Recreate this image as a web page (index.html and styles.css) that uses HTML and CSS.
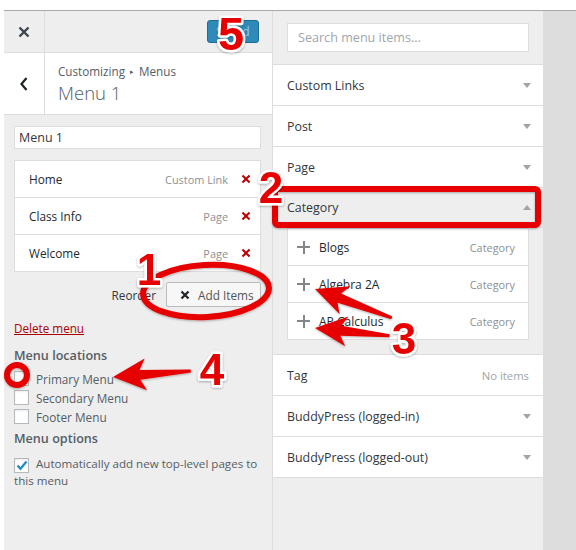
FILE: index.html
```html
<!DOCTYPE html>
<html>
<head>
<meta charset="utf-8">
<link rel="stylesheet" href="styles.css">
</head>
<body>
<div class="app">
  <aside class="left">
    <div class="hdr">
      <div class="close"><svg width="12" height="12" viewBox="0 0 12 12"><path d="M1.5 1.5L10.5 10.5M10.5 1.5L1.5 10.5" stroke="#3c434a" stroke-width="2.4"/></svg></div>
      <button class="save">Saved</button>
    </div>
    <div class="title">
      <div class="back"><svg width="8" height="14" viewBox="0 0 8 14"><path d="M6.5 1L1.5 7L6.5 13" fill="none" stroke="#1d2327" stroke-width="2.2"/></svg></div>
      <div class="ttext">
        <div class="crumb">Customizing<span class="sep">&#9656;</span>Menus</div>
        <div class="mname">Menu 1</div>
      </div>
    </div>
    <div class="lbody">
      <div class="name">Menu 1</div>
      <ul class="mitems">
        <li class="mitem"><span class="it">Home</span><span class="ty">Custom Link</span><span class="del"></span></li>
        <li class="mitem"><span class="it">Class Info</span><span class="ty">Page</span><span class="del"></span></li>
        <li class="mitem"><span class="it">Welcome</span><span class="ty">Page</span><span class="del"></span></li>
      </ul>
      <div class="actions">
        <span class="reorder">Reorder</span>
        <button class="add"><svg width="10" height="10" viewBox="0 0 10 10"><path d="M1.5 1.5L8.5 8.5M8.5 1.5L1.5 8.5" stroke="#23282d" stroke-width="2.3"/></svg>Add Items</button>
      </div>
      <a class="delete">Delete menu</a>
      <h3 class="ctitle">Menu locations</h3>
      <div class="cbrow"><span class="box"></span>Primary Menu</div>
      <div class="cbrow"><span class="box"></span>Secondary Menu</div>
      <div class="cbrow"><span class="box"></span>Footer Menu</div>
      <h3 class="ctitle opt">Menu options</h3>
      <div class="auto"><span class="box checked"><svg width="12" height="11" viewBox="0 0 12 11"><path d="M1.5 5.5L4.5 8.8L10.5 1.5" fill="none" stroke="#1e8cbe" stroke-width="2.2"/></svg></span>Automatically add new top-level pages to this menu</div>
    </div>
  </aside>
  <section class="right">
    <div class="search">Search menu items...</div>
    <div class="sections">
      <div class="sec"><div class="sh"><span>Custom Links</span><i class="tri"></i></div></div>
      <div class="sec"><div class="sh"><span>Post</span><i class="tri"></i></div></div>
      <div class="sec"><div class="sh"><span>Page</span><i class="tri"></i></div></div>
      <div class="sec open">
        <div class="sh"><span>Category</span><i class="tri up"></i></div>
        <div class="sc">
          <div class="citem"><i class="plus"></i><span class="ct">Blogs</span><span class="ty">Category</span></div>
          <div class="citem"><i class="plus"></i><span class="ct">Algebra 2A</span><span class="ty">Category</span></div>
          <div class="citem"><i class="plus"></i><span class="ct">AP Calculus</span><span class="ty">Category</span></div>
        </div>
      </div>
      <div class="sec"><div class="sh"><span>Tag</span><span class="none">No items</span></div></div>
      <div class="sec"><div class="sh"><span>BuddyPress (logged-in)</span><i class="tri"></i></div></div>
      <div class="sec"><div class="sh"><span>BuddyPress (logged-out)</span><i class="tri"></i></div></div>
    </div>
  </section>
  <div class="gutter"></div>
</div>

<svg class="marks" width="576" height="550" viewBox="0 0 576 550">
  <defs>
    <filter id="sh" x="-20%" y="-20%" width="140%" height="140%">
      <feDropShadow dx="0" dy="1" stdDeviation="1" flood-color="#000" flood-opacity="0.3"/>
    </filter>
  </defs>
  <g filter="url(#sh)" fill="none" stroke="#e60000">
    <ellipse cx="206" cy="291" rx="63" ry="26" stroke-width="6" transform="rotate(-3 206 291)"/>
    <rect x="275" y="189" width="263" height="36" rx="3" stroke-width="6"/>
    <circle cx="17" cy="375" r="10" stroke-width="6"/>
  </g>
  <g filter="url(#sh)" fill="#e60000">
    <path transform="translate(113 377) rotate(-4.5)" d="M0 0L33 -16L27 -5L78 -1.5L78 1.5L27 5L33 16Z"/>
    <path transform="translate(315 289) rotate(20.6)" d="M0 0L32 -15L26 -5L82 -1.5L82 1.5L26 5L32 15Z"/>
    <path transform="translate(315 328) rotate(6)" d="M0 0L32 -15L26 -5L75 -1.5L75 1.5L26 5L32 15Z"/>
  </g>
  <g class="num" filter="url(#sh)">
    <text x="149" y="285">1</text>
    <text x="271" y="203">2</text>
    <text x="404" y="354">3</text>
    <text x="212" y="385">4</text>
    <text x="231" y="50" class="big">5</text>
  </g>
</svg>
</body>
</html>
```

FILE: styles.css
```css
* { box-sizing: border-box; }
html, body { margin: 0; padding: 0; }
body {
  width: 576px;
  height: 550px;
  overflow: hidden;
  position: relative;
  background: #fff;
  font-family: "Open Sans", "Liberation Sans", sans-serif;
  color: #32373c;
}
.app {
  display: flex;
  margin: 10px 0 0 4px;
  border-top: 1px solid #a9a9a9;
  height: 540px;
}
.left {
  width: 269px;
  flex: none;
  background: #eee;
  border-right: 1px solid #ddd;
  display: flex;
  flex-direction: column;
}
.hdr {
  height: 42px;
  display: flex;
  align-items: center;
  border-bottom: 1px solid #ddd;
  background: #eee;
}
.close {
  width: 41px;
  height: 100%;
  border-right: 1px solid #ddd;
  display: flex;
  align-items: center;
  justify-content: center;
}
.save {
  margin: 0 13px 0 auto;
  width: 52px;
  height: 23px;
  background: #2e8bb9;
  border: 1px solid #1f6d97;
  border-radius: 3px;
  color: #9fcbe2;
  font: 12px "Open Sans", sans-serif;
  padding: 0;
}
.title {
  height: 62px;
  display: flex;
  background: #fff;
  border-bottom: 1px solid #ddd;
}
.back {
  width: 41px;
  border-right: 1px solid #ddd;
  display: flex;
  align-items: center;
  justify-content: center;
}
.ttext {
  padding-left: 13px;
  display: flex;
  flex-direction: column;
  justify-content: center;
  color: #555d66;
}
.crumb { font-size: 11.7px; line-height: 18px; }
.sep { font-size: 7px; vertical-align: 2px; margin: 0 5px 0 5px; }
.mname { font-size: 18.5px; font-weight: 300; line-height: 24px; }
.lbody { padding: 11px 11px 0 10px; }
.name {
  height: 23px;
  border: 1px solid #ddd;
  background: #fff;
  font-size: 12.5px;
  line-height: 21px;
  padding-left: 4px;
  color: #32373c;
}
.mitems { list-style: none; margin: 11px 0 0; padding: 0; }
.mitem {
  height: 38px;
  border: 1px solid #ddd;
  background: #fff;
  display: flex;
  align-items: center;
  padding: 0 10px 0 14px;
  font-size: 11.8px;
}
.mitem + .mitem { margin-top: -1px; }
.it { color: #23282d; flex: 1; }
.ty { color: #8c8f94; font-size: 10.9px; }
.del {
  width: 8px;
  height: 8px;
  margin-left: 14px;
  position: relative;
}
.del::before, .del::after {
  content: "";
  position: absolute;
  left: -1px;
  top: 3px;
  width: 10px;
  height: 2px;
  background: #b00;
  transform: rotate(45deg);
}
.del::after { transform: rotate(-45deg); }
.actions {
  margin-top: 10px;
  display: flex;
  justify-content: flex-end;
  align-items: center;
  gap: 10px;
  font-size: 11.8px;
}
.reorder { color: #32373c; }
.add {
  width: 95px;
  height: 25px;
  border: 1px solid #bbb;
  background: #f7f7f7;
  border-radius: 2px;
  font: 11.8px "Open Sans", sans-serif;
  color: #555;
  display: flex;
  align-items: center;
  gap: 8px;
  padding: 0 0 0 13px;
}
.delete {
  display: block;
  margin-top: 12px;
  font-size: 11.7px;
  line-height: 18px;
  color: #a00;
  text-decoration: underline;
}
.ctitle {
  margin: 9px 0 0;
  font-size: 12.6px;
  font-weight: 600;
  line-height: 20px;
  color: #555d66;
}
.ctitle.opt { margin-top: 3px; }
.cbrow {
  display: flex;
  align-items: center;
  height: 19px;
  font-size: 11.8px;
  color: #555d66;
}
.ctitle + .cbrow { margin-top: 3px; }
.box {
  width: 15px;
  height: 15px;
  border: 1px solid #b4b9be;
  background: #fff;
  box-shadow: inset 0 1px 2px rgba(0,0,0,.08);
  margin-right: 7px;
  flex: none;
  display: inline-flex;
  align-items: center;
  justify-content: center;
}
.auto {
  margin-top: 7px;
  margin-right: -2px;
  font-size: 11.6px;
  line-height: 16px;
  color: #555d66;
}
.auto .box { vertical-align: -3px; }
.right {
  width: 270px;
  flex: none;
  background: #eee;
  padding-top: 12px;
}
.search {
  margin: 0 14px;
  height: 29px;
  border: 1px solid #ddd;
  background: #fff;
  font-size: 12.6px;
  line-height: 27px;
  padding-left: 10px;
  color: #a0a5aa;
}
.sections { margin-top: 12px; }
.sec { background: #fff; border-top: 1px solid #ddd; }
.sec:last-child { border-bottom: 1px solid #ddd; }
.sh {
  height: 40px;
  display: flex;
  align-items: center;
  justify-content: space-between;
  padding: 0 12px 0 14px;
  font-size: 12.4px;
  color: #32373c;
}
.open { background: #eee; }
.open .sh { border-bottom: 1px solid #ddd; }
.tri {
  width: 0;
  height: 0;
  border-left: 4px solid transparent;
  border-right: 4px solid transparent;
  border-top: 5px solid #a0a5aa;
}
.tri.up { border-top: 0; border-bottom: 5px solid #a0a5aa; }
.none { color: #a0a5aa; margin-right: 2px; font-size: 11.3px; }
.sc { padding: 0 14px 14px; }
.citem {
  height: 38px;
  border: 1px solid #ddd;
  background: #fff;
  display: flex;
  align-items: center;
  padding: 0 13px 0 9px;
  font-size: 12px;
}
.citem + .citem { margin-top: -1px; }
.plus {
  width: 13px;
  height: 13px;
  position: relative;
  margin-right: 9px;
}
.plus::before, .plus::after {
  content: "";
  position: absolute;
  background: #82878c;
}
.plus::before { left: 0; top: 5.5px; width: 13px; height: 2px; }
.plus::after { top: 0; left: 5.5px; width: 2px; height: 13px; }
.ct { flex: 1; color: #23282d; }
.gutter { flex: 1; background: #ddd; }
.marks { position: absolute; left: 0; top: 0; pointer-events: none; }
.num text {
  font-family: "Liberation Sans", Arial, sans-serif;
  font-weight: 700;
  font-size: 44px;
  fill: #e60000;
  stroke: #fff;
  stroke-width: 5px;
  stroke-linejoin: round;
  paint-order: stroke;
  text-anchor: middle;
}
.num text.big { font-size: 47px; }
```
